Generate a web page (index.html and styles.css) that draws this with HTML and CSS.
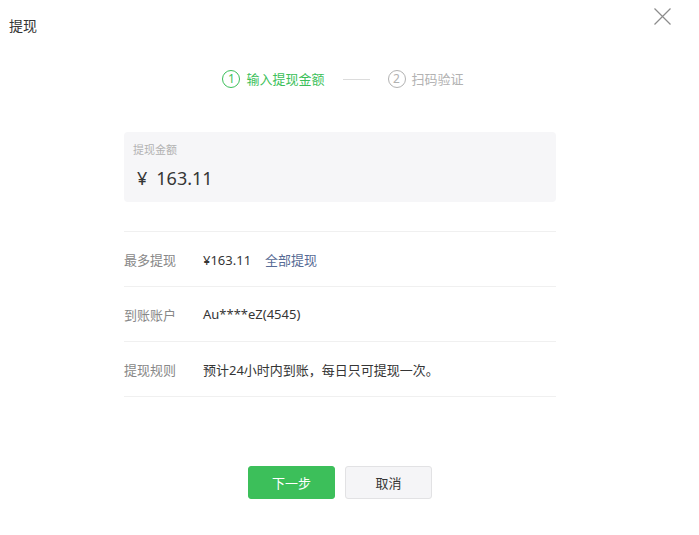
FILE: index.html
```html
<!DOCTYPE html>
<html lang="zh-CN">
<head>
<meta charset="utf-8">
<title>提现</title>
<link rel="stylesheet" href="styles.css">
</head>
<body>
<div class="dialog">
  <div class="header">
    <span class="title">提现</span>
    <button class="close" aria-label="关闭">
      <svg width="17" height="17" viewBox="0 0 17 17"><path d="M0.5 0.5 L16.5 16.5 M16.5 0.5 L0.5 16.5" stroke="#8c8c8c" stroke-width="1.2" fill="none"/></svg>
    </button>
  </div>

  <div class="steps">
    <div class="step active"><span class="num">1</span><span>输入提现金额</span></div>
    <span class="step-line"></span>
    <div class="step"><span class="num">2</span><span>扫码验证</span></div>
  </div>

  <div class="content">
    <div class="amount-card">
      <div class="amount-label">提现金额</div>
      <div class="amount-value"><span class="yen">¥</span>163.11</div>
    </div>

    <div class="rows">
      <div class="row"><span class="row-label">最多提现</span><span class="row-value">¥163.11<a class="link">全部提现</a></span></div>
      <div class="row"><span class="row-label">到账账户</span><span class="row-value">Au****eZ(4545)</span></div>
      <div class="row"><span class="row-label">提现规则</span><span class="row-value">预计24小时内到账，每日只可提现一次。</span></div>
    </div>

    <div class="actions">
      <button class="btn primary">下一步</button>
      <button class="btn default">取消</button>
    </div>
  </div>
</div>
</body>
</html>
```

FILE: styles.css
```css
* { box-sizing: border-box; }
html, body {
  margin: 0;
  padding: 0;
  background: #fff;
}
body {
  font-family: "Noto Sans", "Noto Sans CJK SC", sans-serif;
  color: #353535;
}
.dialog {
  position: relative;
  width: 680px;
  height: 535px;
}
.header {
  height: 46px;
  padding: 14px 9px 0;
}
.title {
  font-size: 14px;
  line-height: 18px;
  color: #353535;
}
.close {
  position: absolute;
  top: 8px;
  right: 9px;
  width: 17px;
  height: 17px;
  padding: 0;
  border: 0;
  background: none;
  cursor: pointer;
}
.close svg { display: block; }

.steps {
  display: flex;
  align-items: center;
  justify-content: center;
  gap: 18px;
  margin-top: 24px;
  margin-left: 6px;
  height: 18px;
}
.step {
  display: flex;
  align-items: center;
  gap: 6px;
  font-size: 13px;
  line-height: 18px;
  color: #b2b2b2;
}
.step .num {
  width: 18px;
  height: 18px;
  border: 1.2px solid #b2b2b2;
  border-radius: 50%;
  display: flex;
  align-items: center;
  justify-content: center;
  font-size: 12px;
  line-height: 1;
}
.step.active { color: #3cbf5a; }
.step.active .num { border-color: #3cbf5a; }
.step-line {
  width: 27px;
  height: 1px;
  background: #dcdcdc;
}

.content {
  width: 432px;
  margin: 44px auto 0;
}
.amount-card {
  height: 70px;
  background: #f6f6f8;
  border-radius: 4px;
  padding: 10px 9px 0;
}
.amount-label {
  font-size: 11px;
  line-height: 15px;
  color: #b2b2b2;
}
.amount-value {
  margin-top: 9px;
  padding-left: 4px;
  font-size: 18px;
  line-height: 24px;
  color: #353535;
}
.yen {
  margin-right: 9px;
}

.rows {
  margin-top: 29px;
  border-top: 1px solid #f0f0f0;
}
.row {
  display: flex;
  align-items: center;
  height: 55px;
  border-bottom: 1px solid #f0f0f0;
  font-size: 13px;
}
.row-label {
  width: 79px;
  color: #888;
}
.row-value {
  color: #353535;
}
.link {
  margin-left: 14px;
  color: #576b95;
  cursor: pointer;
}

.actions {
  display: flex;
  justify-content: center;
  gap: 10px;
  margin-top: 69px;
}
.btn {
  width: 87px;
  height: 33px;
  border-radius: 3px;
  font-family: inherit;
  font-size: 13px;
  cursor: pointer;
}
.btn.primary {
  background: #3cbf5a;
  border: 1px solid #3cbf5a;
  color: #fff;
}
.btn.default {
  background: #f5f5f7;
  border: 1px solid #e2e2e4;
  color: #353535;
}
```
